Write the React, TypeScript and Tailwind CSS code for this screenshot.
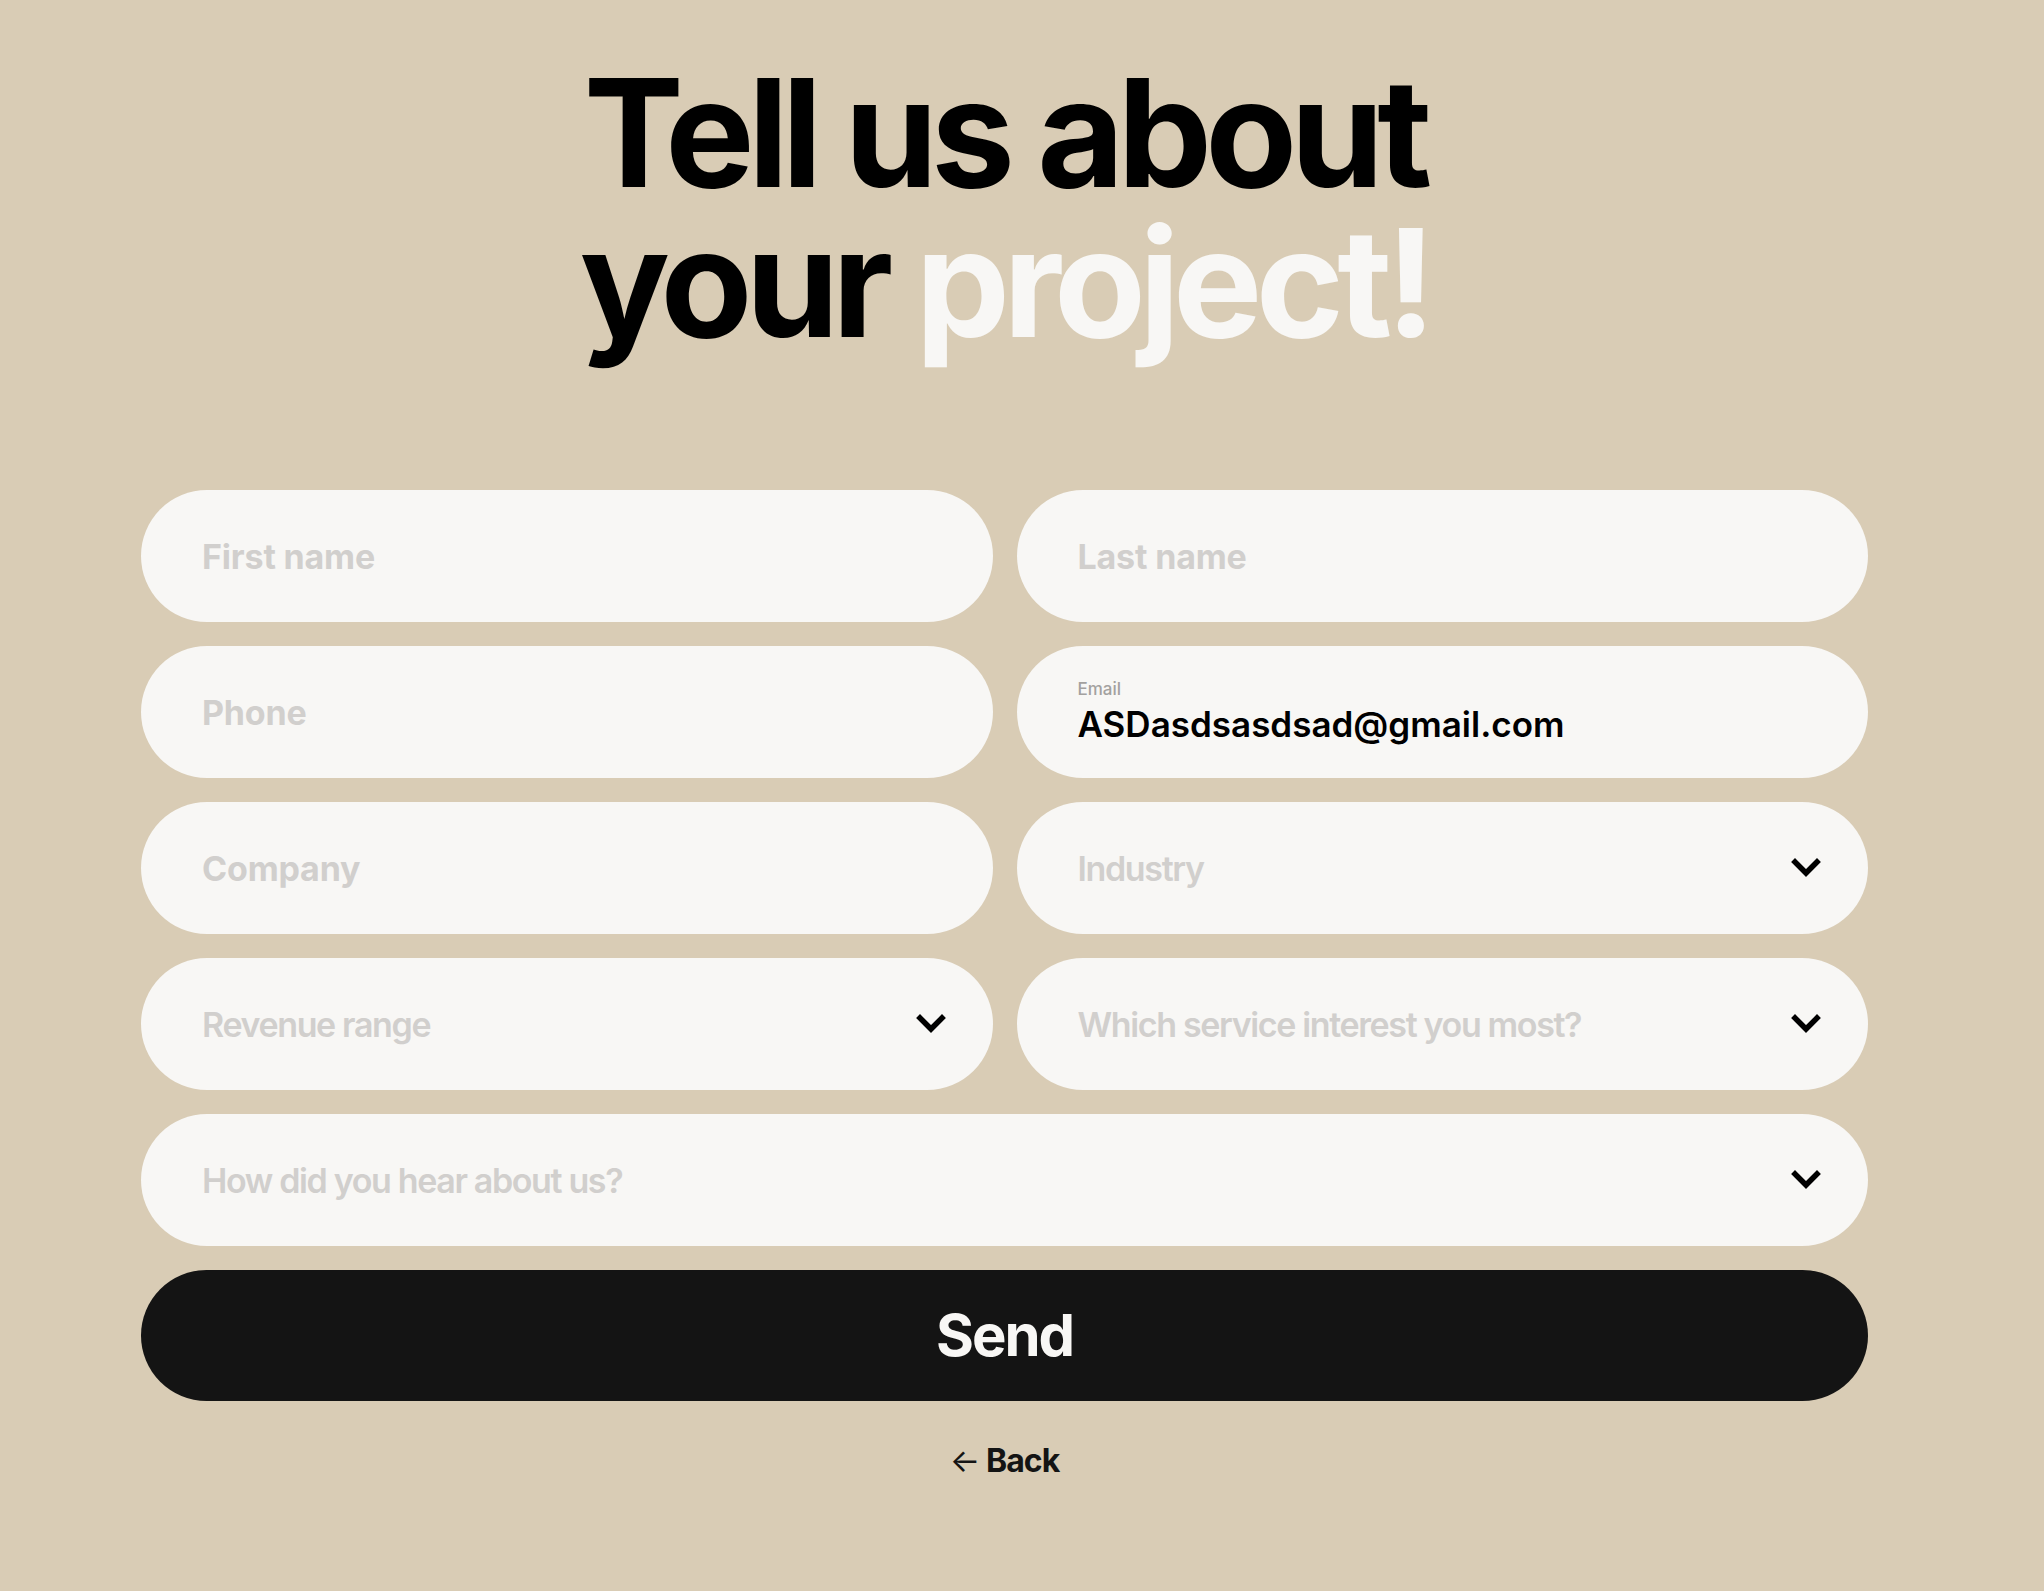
import { useState } from 'react'

const font = { fontFamily: 'Inter, "Noto Sans", sans-serif' }

function Chevron() {
  return (
    <svg width="30" height="20" viewBox="0 0 30 20" className="shrink-0">
      <polyline points="4,4 15,15 26,4" fill="none" stroke="#000" strokeWidth="5.5" strokeLinecap="square" />
    </svg>
  )
}

function Field({ placeholder, select = false }: { placeholder: string; select?: boolean }) {
  const [value, setValue] = useState('')
  return (
    <div className="flex h-[132px] items-center rounded-full bg-[#f8f7f5] pl-[61px] pr-[47px]">
      <input
        value={value}
        onChange={e => setValue(e.target.value)}
        placeholder={placeholder}
        className={
          select
            ? 'min-w-0 flex-1 bg-transparent text-[34px] font-semibold tracking-[-0.04em] text-[#111] outline-none placeholder:text-[#d1cfcd]'
            : 'min-w-0 flex-1 bg-transparent text-[34px] font-bold tracking-[-0.005em] text-[#111] outline-none placeholder:text-[#d1cfcd]'
        }
        style={font}
      />
      {select && <Chevron />}
    </div>
  )
}

function EmailField() {
  const [value, setValue] = useState('ASDasdsasdsad@gmail.com')
  return (
    <div className="flex h-[132px] flex-col justify-center rounded-full bg-[#f8f7f5] pl-[61px] pr-[47px]">
      <label className="text-[17px] font-medium leading-[20px] text-[#a3a19f]" style={font}>Email</label>
      <input
        value={value}
        onChange={e => setValue(e.target.value)}
        className="mt-[4px] bg-transparent text-[35px] font-semibold leading-[42px] text-black outline-none"
        style={font}
      />
    </div>
  )
}

export default function App() {
  return (
    <div className="min-h-screen bg-[#d9ccb5] pb-[80px] pl-[141px] pr-[176px] pt-[58px]" style={font}>
      <h1 className="text-center text-[150px] font-bold leading-[150px] tracking-[-0.045em] text-black">
        Tell us about
        <br />
        your <span className="text-[#f8f7f5]">project!</span>
      </h1>

      <form className="mt-[132px] flex flex-col gap-[24px]" onSubmit={e => e.preventDefault()}>
        <div className="grid grid-cols-2 gap-[24px]">
          <Field placeholder="First name" />
          <Field placeholder="Last name" />
          <Field placeholder="Phone" />
          <EmailField />
          <Field placeholder="Company" />
          <Field placeholder="Industry" select />
          <Field placeholder="Revenue range" select />
          <Field placeholder="Which service interest you most?" select />
        </div>
        <Field placeholder="How did you hear about us?" select />
        <button
          type="submit"
          className="h-[131px] rounded-full bg-[#141414] text-[58px] font-bold tracking-[-0.035em] text-[#f8f7f5]"
        >
          Send
        </button>
      </form>

      <div className="mt-[36px] flex justify-center">
        <a href="#" className="text-[32px] font-bold tracking-[-0.03em] text-[#141414]">
          <span className="font-normal">←</span> Back
        </a>
      </div>
    </div>
  )
}
